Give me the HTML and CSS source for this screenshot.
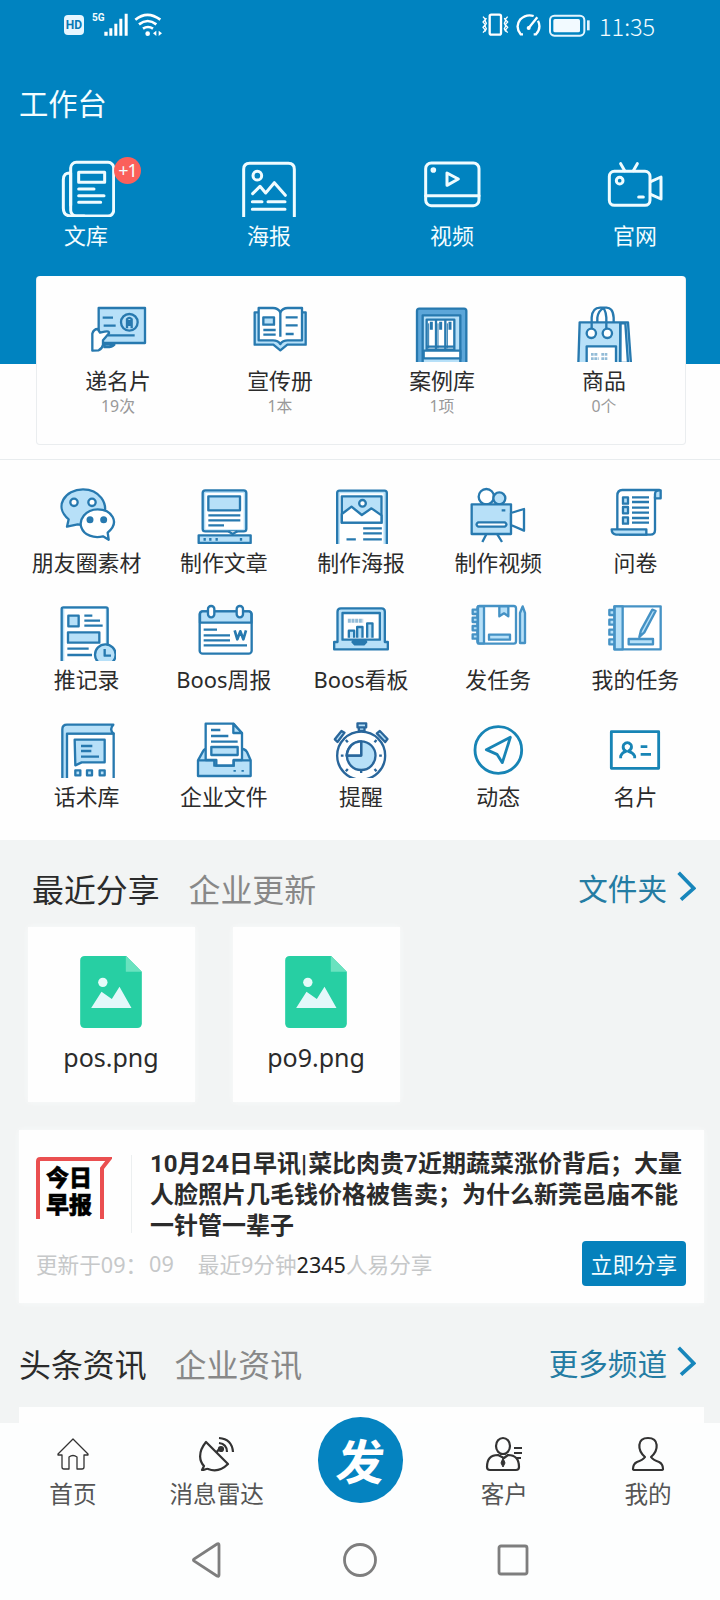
FILE: index.html
```html
<!DOCTYPE html>
<html lang="zh-CN">
<head>
<meta charset="utf-8">
<title>工作台</title>
<link rel="stylesheet" href="styles.css">
</head>
<body>
<div class="page">
  <header class="header">
    <div class="status">
      <span class="hd">HD</span>
      <span class="net">5G</span>
      <svg class="signal" width="24" height="23" viewBox="310 37 72 69" fill="#fff"><path d="M311 93h10v12h-10zM326 83h9v22h-9zM341 69h9v36h-9zM356 54h9v51h-9zM372 39h9v66h-9z"/></svg>
      <svg class="wifi" width="28" height="23" viewBox="400 36 84 69" fill="none" stroke="#fff" stroke-width="8"><path d="M404 56q36-29 75 0M415 70q26-20 52 0M427 83q15-10 30 0"/><circle cx="441" cy="98" r="7" fill="#fff" stroke="none"/><path d="M457 97l10-8v16zM484 97l-10-8v16z" fill="#fff" stroke="none"/></svg>
      <span class="grow"></span>
      <svg width="27" height="23" viewBox="365 37 81 69" fill="none" stroke="#fff" stroke-width="7"><rect x="388" y="42" width="34" height="60" rx="5"/><path d="M368 48l7 8-7 8 7 8-7 8 7 8-7 8M378 52l-4 8 4 8-4 8 4 8-4 8M442 48l-7 8 7 8-7 8 7 8-7 8 7 8M432 52l4 8-4 8 4 8-4 8 4 8" stroke-width="4"/></svg>
      <svg class="gauge" width="26" height="23" viewBox="466 37 78 69" fill="none" stroke="#fff" stroke-width="7"><path d="M487 101h-7q-18-23-1-45 18-17 40-10M532 60q11 22-6 41h-7"/><path d="M504 82l26-32"/><circle cx="504" cy="82" r="6" fill="#fff" stroke="none"/></svg>
      <svg class="battery" width="42" height="23" viewBox="565 39 126 69" fill="none" stroke="#e3f5ff" stroke-width="6"><rect x="568" y="44" width="103" height="60" rx="13"/><rect x="578" y="54" width="80" height="40" rx="5" fill="#f2faff" stroke="none"/><path d="M683 58v30" stroke-width="8"/></svg>
      <span class="time">11:35</span>
    </div>
    <h1 class="title">工作台</h1>
    <nav class="quick">
      <a class="item light">
        <svg class="icon" viewBox="171 480 174 171"><rect x="212" y="487" width="129" height="161" rx="17"/><path d="M212 616v-97q-22-2-22 20v86q0 23 23 23h40M236 517h78v30h-78zM236 567h46M236 587h76M236 607h66"/></svg>
        <span class="label">文库</span><i class="badge">+1</i>
      </a>
      <a class="item light">
        <svg class="icon" viewBox="720 480 174 171"><path d="M731 655V508q0-18 18-18h116q18 0 18 18v147M758 581l22-22 17 20 26-31 33 38M757 605h29M804 605h51M757 628h98"/><circle cx="772" cy="527" r="13"/></svg>
        <span class="label">海报</span>
      </a>
      <a class="item light">
        <svg class="icon" viewBox="189 480 174 171"><rect x="197" y="489" width="160" height="128" rx="17"/><path d="M197 587h160M261 519v37l34-19z"/><circle cx="220" cy="510" r="4"/></svg>
        <span class="label">视频</span>
      </a>
      <a class="item light">
        <svg class="icon" viewBox="738 480 174 171"><rect x="748" y="514" width="122" height="102" rx="15"/><path d="M782 491l12 21M832 491l-12 21M872 545l31-14v66l-31-14M836 591h14"/><circle cx="779" cy="542" r="10"/></svg>
        <span class="label">官网</span>
      </a>
    </nav>
  </header>

  <section class="stats">
    <a class="item">
      <svg class="icon" viewBox="205 135 174 171"><path class="f" d="M234 144h139v105H234z"/><path d="M246 173h31M249 197h36M262 226h80"/><circle cx="326" cy="187" r="25"/><path d="M319 205v-27q7-9 14 0v27M326 180v18"/><path class="w" d="M215 272v-51q4-14 16-14l7 11 14-3q15-3 13 5l-18 21v13q-2 11-13 17z"/><path class="f" d="M252 254h29q-8 9-30 7z"/></svg>
      <span class="label">递名片</span><small class="count">19次</small>
    </a>
    <a class="item">
      <svg class="icon" viewBox="692 135 174 171"><path class="f" d="M703 157h153v97h-55l-21 17-21-17h-56z"/><path class="w" d="M715 144h43q15 0 22 13 7-13 22-13h43v97h-43q-15 0-22 11-7-11-22-11h-43z"/><path class="f" d="M729 172h32v22h-32z"/><path d="M780 157v73M729 210h37M729 224h37M796 172h36M796 196h36M796 222h24"/></svg>
      <span class="label">宣传册</span><small class="count">1本</small>
    </a>
    <a class="item">
      <svg class="icon" viewBox="130 135 174 171"><rect x="142" y="146" width="148" height="168" rx="7" fill="#5ca6d9"/><path class="f" d="M159 166h113v145H159z"/><path class="w" d="M171 179h83v90h-83zM162 272h110v23H162z"/><path d="M199 179v90M227 179v90M171 260h83"/><path d="M185 185v24M213 185v24M241 185v24" stroke-width="9"/><path d="M177 190v75M205 190v75M233 190v75" stroke-width="3"/></svg>
      <span class="label">案例库</span><small class="count">1项</small>
    </a>
    <a class="item">
      <svg class="icon" viewBox="617 135 174 171"><path class="f" d="M631 187h145l9 125H627z"/><path class="w" d="M753 190h15l8 119h-24z"/><path d="M753 187v120M667 207v-34q2-31 27-30M711 207v-34q-2-31-17-30h14q23-3 25 30v14M684 187v-14q3-22 20-29"/><circle class="w" cx="666" cy="220" r="14"/><circle class="w" cx="714" cy="220" r="14"/><path class="w" d="M652 259h88v60h-88z"/><path d="M665 283h21M665 296h23M696 283h20M696 296h18" stroke-width="8" stroke-dasharray="8 2" opacity=".5"/></svg>
      <span class="label">商品</span><small class="count">0个</small>
    </a>
  </section>

  <section class="tools">
    <a class="item"><svg class="icon" viewBox="171 51 174 171"><path class="f" d="M198 170l5-22c-46-38-11-90 43-90 49 0 77 42 62 80-14 32-49 31-78 25z"/><path class="w" d="M323 209l-3-21c39-32 11-70-30-70-37 0-57 32-49 54 8 24 38 34 65 27z"/><circle class="w" cx="219" cy="97" r="11"/><circle class="w" cx="273" cy="97" r="11"/><circle cx="267" cy="149" r="7" class="d"/><circle cx="308" cy="149" r="7" class="d"/></svg><span class="label">朋友圈素材</span></a>
    <a class="item"><svg class="icon" viewBox="583 51 174 171"><rect class="f" x="606" y="61" width="131" height="123" rx="8"/><rect x="614" y="69" width="115" height="109" fill="#fff" stroke="none"/><path class="f" d="M623 79h95v42h-95zM594 196h156v23H594z"/><path d="M623 136h96M623 151h96M623 166h47M612 204v8M629 204v8M648 204v8M721 204v8"/><path class="w" d="M683 184l13 8 14-8"/></svg><span class="label">制作文章</span></a>
    <a class="item"><svg class="icon" viewBox="-85.5 51 174 171"><rect class="f" x="-70" y="62" width="149" height="170" rx="7"/><path d="M-62 70H69v155H-62z" fill="#fff" stroke="none"/><path class="f" d="M-56 79H63v79H-56z"/><path class="w" d="M-56 132l29-22 31 25 29-20 30 21v22H-56z"/><circle class="w" cx="6" cy="100" r="10"/><path d="M8 175h56M8 190h56M-42 208h28M8 208h56"/></svg><span class="label">制作海报</span></a>
    <a class="item"><svg class="icon" viewBox="326 51 174 171"><circle class="w" cx="378" cy="80" r="23"/><circle class="f" cx="417" cy="85" r="18"/><path class="f" d="M334 103h118v89H334z"/><path class="w" d="M452 129l39-12v65l-39-17zM354 157h79q11 7 0 13h-79q-11-6 0-13z"/><path d="M424 121h11M378 193l-12 23M411 193l14 23"/></svg><span class="label">制作视频</span></a>
    <a class="item"><svg class="icon" viewBox="738 51 174 171"><path class="w" d="M772 177V77q0-17 15-17h111q-13 4-13 22v98q0 14-14 14H780z"/><path class="f" d="M885 85V72q0-13 17-11v24zM755 178h104v16h-91q-13-2-13-16z"/><path class="f" d="M789 82h15v19h-15zM789 111h15v19h-15zM789 142h15v19h-15z"/><path d="M816 82h51M816 96h51M816 113h51M816 128h51M816 144h51M816 158h51"/></svg><span class="label">问卷</span></a>

    <a class="item"><svg class="icon" viewBox="171 402 174 171"><rect class="f" x="182" y="412" width="138" height="180" rx="5"/><path d="M190 417h124v160H190z" fill="#fff" stroke="none"/><path class="f" d="M202 437h31v32h-31zM201 487h94v31h-94z"/><path d="M250 437h24M250 452h47M250 467h55M199 536h64M199 555h74"/><circle class="f" cx="313" cy="554" r="31"/><path d="M311 537v20h19"/></svg><span class="label">推记录</span></a>
    <a class="item"><svg class="icon" viewBox="583 402 174 171"><rect class="w" x="597" y="424" width="156" height="127" rx="9"/><path class="f" d="M598 458v-26q0-8 8-8h138q8 0 8 8v26z"/><rect class="w" x="622" y="408" width="19" height="34" rx="9"/><rect class="w" x="708" y="408" width="19" height="34" rx="9"/><path d="M609 479h40M609 496h79M609 511h79M609 526h130"/><path d="M702 481l8 27 9-24 9 24 8-27" stroke-width="8"/></svg><span class="label">Boos周报</span></a>
    <a class="item"><svg class="icon" viewBox="-85.5 402 174 171"><path class="f" d="M-69 516v-91q0-10 10-10H63q10 0 10 10v91h9v22H-79v-22z"/><path class="w" d="M-54 429H58v80H-54zM-24 516H17l-7 7h-27z"/><path class="f" d="M-35 503v-21h16v21M-10 503v-32H6v32M20 503v-43h16v43"/><path d="M-38 452H8" stroke-width="12" stroke-dasharray="9 2" opacity=".5"/></svg><span class="label">Boos看板</span></a>
    <a class="item note"><svg class="icon" viewBox="326 402 174 171"><rect class="w" x="351" y="408" width="116" height="113" rx="7"/><path class="f" d="M353 409h18v111h-18zM337 419h15v13h-15zM337 443h15v13h-15zM337 468h15v13h-15zM337 493h15v13h-15zM417 409h27v30l-13-9-14 9zM386 494h63v15h-63zM479 429l8-20 7 20v90h-15z"/></svg><span class="label">发任务</span></a>
    <a class="item note"><svg class="icon" viewBox="738 402 174 171"><path class="w" d="M763 409h139v129H763z"/><path class="f" d="M764 409h24v129h-24zM748 420h15v15h-15zM748 449h15v15h-15zM748 479h15v15h-15zM748 508h15v15h-15zM806 507h73v16h-73zM838 501l5-20 34-62 10 4-34 64z"/></svg><span class="label">我的任务</span></a>

    <a class="item"><svg class="icon" viewBox="171 63 174 171"><path class="w" d="M192 100h146v150H192z"/><path class="f" d="M184 240V88q0-14 14-14h139q-13 14 0 27H198v140zM221 119h90v68h-69l-19 9z"/><path d="M240 138h34M240 153h31M240 170h54"/><path class="f" d="M223 211h15v15h-15zM258 211h15v15h-15zM296 211h15v15h-15z"/></svg><span class="label">话术库</span></a>
    <a class="item"><svg class="icon" viewBox="583 63 174 171"><path class="f" d="M592 181l15-27q7-13 30-8h70q25-3 32 10l11 25v47H592z"/><path class="w" d="M615 71h84l25 29v80h-25v17h-52v-17h-32z"/><path class="f" d="M698 72v27h26zM632 141h79v24h-79z"/><path d="M631 90h28M631 108h52M631 125h80M594 181h47v16h58v-16h50M702 210v5M726 210v5"/></svg><span class="label">企业文件</span></a>
    <a class="item watch"><svg class="icon" viewBox="-85.5 63 174 171"><circle class="w" cx="2" cy="167" r="72"/><circle class="f" cx="2" cy="167" r="43"/><path class="w" d="M2 167V124h-3q-35 4-41 43z"/><path class="f" d="M-9 70h26v12H-9zM-5 82h17v11H-5zM49 100l9-7 23 24-7 9zM-48 98l-9-5-20 25 8 8z"/><path d="M2 167V124M-41 167H2M2 210v9M-59 167h8M56 167h8M42 127l6-7M-38 127l-6-7M42 207l6 7M-38 207l-6 7"/></svg><span class="label">提醒</span></a>
    <a class="item flat"><svg class="icon" viewBox="326 63 174 171"><circle cx="414" cy="150" r="70"/><path d="M378 149l72-37-24 76-16-25z"/></svg><span class="label">动态</span></a>
    <a class="item flat"><svg class="icon" viewBox="738 63 174 171"><path d="M754 95h142v110H754zM782 175v-7q5-12 16-14-12-7-7-20 11-12 22 0 5 13-8 20 14 3 19 14v7M842 140h20M842 163h31"/></svg><span class="label">名片</span></a>
  </section>

  <main class="feed">
    <div class="bar recent">
      <b class="on">最近分享</b><b>企业更新</b>
      <a class="more">文件夹<svg width="20" height="30" viewBox="950 510 60 90"><path d="M958 515l45 47-38 34"/></svg></a>
    </div>
    <div class="files">
      <div class="file">
        <svg width="62" height="72" viewBox="240 138 185 216"><path d="M254 138h124l47 47v155q0 14-14 14H254q-14 0-14-14V152q0-14 14-14z" fill="#27cfa3"/><path d="M377 138v47h48z" fill="#6ae2bf"/><circle cx="308" cy="217" r="14" fill="#e6fbf9"/><path d="M273 294l31-49 31 22 23-37 36 64z" fill="#e3f8fa"/></svg>
        <span>pos.png</span>
      </div>
      <div class="file">
        <svg width="62" height="72" viewBox="240 138 185 216"><path d="M254 138h124l47 47v155q0 14-14 14H254q-14 0-14-14V152q0-14 14-14z" fill="#27cfa3"/><path d="M377 138v47h48z" fill="#6ae2bf"/><circle cx="308" cy="217" r="14" fill="#e6fbf9"/><path d="M273 294l31-49 31 22 23-37 36 64z" fill="#e3f8fa"/></svg>
        <span>po9.png</span>
      </div>
    </div>
    <article class="news">
      <div class="news-top">
        <div class="paper">
          <svg class="frame" width="76" height="62" viewBox="108 111 228 186" fill="none" stroke="#ea4f50" stroke-width="12"><path d="M114 297V124q0-7 7-7h207l-22 28v152"/></svg>
          今日<br>早报
        </div>
        <h2>10月24日早讯<span class="pipe">|</span>菜比肉贵7近期蔬菜涨价背后；大量<br>人脸照片几毛钱价格被售卖；为什么新莞邑庙不能<br>一针管一辈子</h2>
      </div>
      <div class="news-foot">
        <span>更新于09：</span><span class="minute">09</span><span>最近9分钟<em>2345</em>人易分享</span>
        <button class="share">立即分享</button>
      </div>
    </article>
    <div class="bar channels">
      <b class="on">头条资讯</b><b>企业资讯</b>
      <a class="more">更多频道<svg width="20" height="30" viewBox="950 510 60 90"><path d="M958 515l45 47-38 34"/></svg></a>
    </div>
    <div class="next"></div>
  </main>

  <footer class="dock">
    <nav class="tabs">
      <a class="tab"><svg width="34" height="36" viewBox="-17 -18 34 36" stroke-width="1.3"><path d="M0-15L-15 0v1h4v12q0 2 2 2h5V3q4-3 8 0v12h5q2 0 2-2V1h4V0z"/></svg>首页</a>
      <a class="tab"><svg width="38" height="36" viewBox="-19 -18 38 36" stroke-width="2.2"><path d="M-11-12C-20-1-17 8-13 12l-2 4c3 0 5-2 6-1C-1 18 6 15 11 10zM-1-1l4-5M2-11q8 1 8 9M2-16q13 1 14 14"/><circle cx="4" cy="-5" r="2" fill="#333"/></svg>消息雷达</a>
      <a class="send"><span>发</span></a>
      <a class="tab"><svg width="38" height="36" viewBox="-19 -18 38 36" stroke-width="2.2"><ellipse cx="-1" cy="-8" rx="7" ry="8"/><path d="M-6 1q-11 0-11 12 0 3 3 3h26q3 0 3-3 0-12-11-12l-4 3zM10-6h8M10-1h8M13 4h4"/><path d="M-1 4l-2 5 2 4 2-4z" fill="#333" stroke-width="1"/></svg>客户</a>
      <a class="tab"><svg width="34" height="36" viewBox="-17 -18 34 36" stroke-width="2.2"><path d="M-3 3C-11-4-11-16 0-16S11-4 3 3q2 3 8 5 4 2 4 7 0 1-2 1h-26q-2 0-2-1 0-5 4-7 6-2 8-5z"/></svg>我的</a>
    </nav>
    <div class="system">
      <svg width="32" height="36" viewBox="0 0 32 36"><path d="M28 3v30q0 2-2 1L3 19q-1-1 0-2L26 2q2-1 2 1z"/></svg>
      <svg width="36" height="36" viewBox="0 0 36 36"><circle cx="18" cy="18" r="15.5"/></svg>
      <svg width="32" height="36" viewBox="0 0 32 36"><rect x="2" y="4" width="28" height="28" rx="2"/></svg>
    </div>
  </footer>
</div>
</body>
</html>
```

FILE: styles.css
```css
* { box-sizing: border-box; }
body {
  margin: 0;
  background: #f2f4f5;
  font-family: "Noto Sans", "Noto Sans CJK SC", sans-serif;
  color: #2b2b2b;
}
.page {
  width: 720px;
  height: 1600px;
  overflow: hidden;
  display: flex;
  flex-direction: column;
}
svg { display: block; flex: none; }

.header {
  height: 364px;
  flex: none;
  background: #0083c0;
  color: #f4fdff;
}
.status {
  display: flex;
  align-items: center;
  height: 48px;
  padding: 0 64px;
}
.hd {
  width: 20px;
  height: 20px;
  margin-top: 2px;
  border-radius: 4px;
  background: #e6f6ff;
  color: #0878b4;
  font: bold 12px/20px Roboto, sans-serif;
  text-align: center;
}
.net {
  width: 12px;
  margin: -12px 0 0 8px;
  font: bold 10px/12px Roboto, sans-serif;
}
.wifi { margin-left: 6px; }
.grow { flex: 1; }
.gauge { margin-left: 7px; }
.battery { margin-left: 7px; margin-top: 2px; }
.time {
  width: 57px;
  margin: 3px 0 0 8px;
  font: 300 23.5px/30px "Noto Sans CJK SC", sans-serif;
  white-space: nowrap;
}
.title {
  margin: 36px 0 0 19px;
  font-size: 29.3px;
  line-height: 40px;
  font-weight: 400;
}
.quick {
  display: flex;
  justify-content: space-between;
  padding: 36px 30px 0 31px;
}
.quick .item { width: 110px; }
.item {
  position: relative;
  display: flex;
  flex-direction: column;
  align-items: center;
}
.icon {
  width: 58px;
  height: 57px;
  overflow: hidden;
  fill: none;
  stroke: #2779af;
  stroke-width: 7;
  stroke-linejoin: round;
}
.icon .f { fill: #b7e0f8; }
.icon .w { fill: #fff; }
.icon .d { fill: #2779af; }
.light .icon {
  stroke: #effcff;
  stroke-width: 9;
  stroke-linecap: round;
}
.note .icon { stroke: #4592c5; }
.watch .icon { stroke: #29669b; }
.flat .icon { stroke: #1784b5; stroke-width: 8.5; }
.label {
  margin-top: 4px;
  font-size: 21.9px;
  line-height: 30px;
  white-space: nowrap;
}
.badge {
  position: absolute;
  left: 83px;
  top: -3px;
  width: 27px;
  height: 27px;
  border-radius: 50%;
  background: #fb605b;
  font: 18px/27px "Noto Sans", sans-serif;
  text-align: center;
  letter-spacing: -1px;
}

.stats {
  display: grid;
  grid-template-columns: repeat(4, 1fr);
  width: 650px;
  height: 169px;
  flex: none;
  margin: -88px 0 14px 36px;
  padding-top: 29px;
  background: #fefefe;
  border: solid rgba(205, 212, 218, .4);
  border-width: 0 1px 1px;
  border-radius: 4px;
}
.count {
  font-size: 15.8px;
  line-height: 20px;
  color: #999;
}
.page::before {
  content: "";
  position: absolute;
  z-index: -1;
  left: 0;
  top: 0;
  width: 720px;
  height: 840px;
  background: #fefefe;
}
.tools {
  display: grid;
  grid-template-columns: repeat(5, 1fr);
  row-gap: 26px;
  height: 381px;
  flex: none;
  padding: 27px 16px 28px 18px;
  border-top: 1px solid #e8ecee;
  background: #fefefe;
  align-content: start;
}

.feed {
  height: 583px;
  flex: none;
  display: flex;
  flex-direction: column;
  background: #f2f4f4;
}
.bar {
  display: flex;
  align-items: center;
  height: 44px;
  padding-right: 24px;
}
.bar b {
  margin-right: 29px;
  font-size: 31.9px;
  line-height: 44px;
  font-weight: 400;
  color: #888;
}
.bar .on { color: #2b2b2b; }
.recent { margin-top: 28px; padding-left: 32px; }
.more {
  display: flex;
  align-items: center;
  gap: 9px;
  margin: -3px 0 0 auto;
  font-size: 29.6px;
  line-height: 40px;
  color: #247ca3;
}
.more svg {
  margin-top: -5px;
  fill: none;
  stroke: #1786bb;
  stroke-width: 11;
}
.files {
  display: flex;
  gap: 38px;
  padding: 15px 0 0 27.5px;
}
.file {
  width: 167px;
  height: 175px;
  padding-top: 29px;
  display: flex;
  flex-direction: column;
  align-items: center;
  background: #fefefe;
  font-size: 25px;
  line-height: 36px;
  box-shadow: 0 0 5px #fafbfb;
}
.file span { margin-top: 11px; }
.news {
  width: 685px;
  height: 173px;
  margin: 28px 0 0 19px;
  padding: 18px 18px 0 17px;
  background: #fefefe;
  box-shadow: 0 0 5px #fafbfb;
}
.news-top { display: flex; height: 93px; }
.paper {
  position: relative;
  width: 96px;
  height: 78px;
  margin-top: 7px;
  padding: 9px 0 0 10px;
  border-right: 1px solid #eceff0;
  color: #000;
  font-size: 23px;
  line-height: 27px;
  font-weight: 900;
  -webkit-text-stroke: .5px #000;
}
.frame { position: absolute; left: 0; top: 2px; }
.news h2 {
  margin: 1px 0 0 18px;
  font-family: Roboto, "Noto Sans CJK SC", sans-serif;
  font-size: 24px;
  line-height: 31px;
  font-weight: 700;
  white-space: nowrap;
}
.pipe { margin-right: 1px; }
.news-foot {
  display: flex;
  align-items: center;
  height: 45px;
  font-size: 21.6px;
  color: #c6c8c9;
  white-space: nowrap;
}
.news-foot em { font-style: normal; color: #222; }
.minute { margin: 0 24px 0 2px; }
.share {
  width: 104px;
  height: 45px;
  margin-left: auto;
  padding: 0;
  border: 0;
  border-radius: 4px;
  background: #0581bc;
  color: #f4fdff;
  font: 21.6px/43px "Noto Sans CJK SC", sans-serif;
}
.channels { margin-top: 40px; padding-left: 19px; }
.channels b { margin-right: 28px; }
.next {
  width: 685px;
  height: 16px;
  margin: 20px 0 0 19px;
  background: #fefefe;
}

.dock { height: 177px; flex: none; background: #fdfefe; }
.tabs { display: flex; height: 100px; padding-left: 1px; }
.tab {
  width: 144px;
  padding-top: 13px;
  display: flex;
  flex-direction: column;
  align-items: center;
  gap: 6px;
  font-size: 23.6px;
  line-height: 32px;
  color: #555;
}
.tab svg { fill: none; stroke: #333; stroke-linejoin: round; }
.send {
  width: 86px;
  height: 86px;
  margin: -6px 29px 0;
  border-radius: 50%;
  background: #0583c0;
  color: #fff;
  font: bold 48px/84px "Noto Sans CJK SC", sans-serif;
  text-align: center;
}
.send span { display: block; transform: skewX(-6deg); }
.system {
  display: flex;
  justify-content: space-between;
  padding: 19px 191px 0 191px;
}
.system svg { fill: none; stroke: #7e7e7e; stroke-width: 2.8; }
```
